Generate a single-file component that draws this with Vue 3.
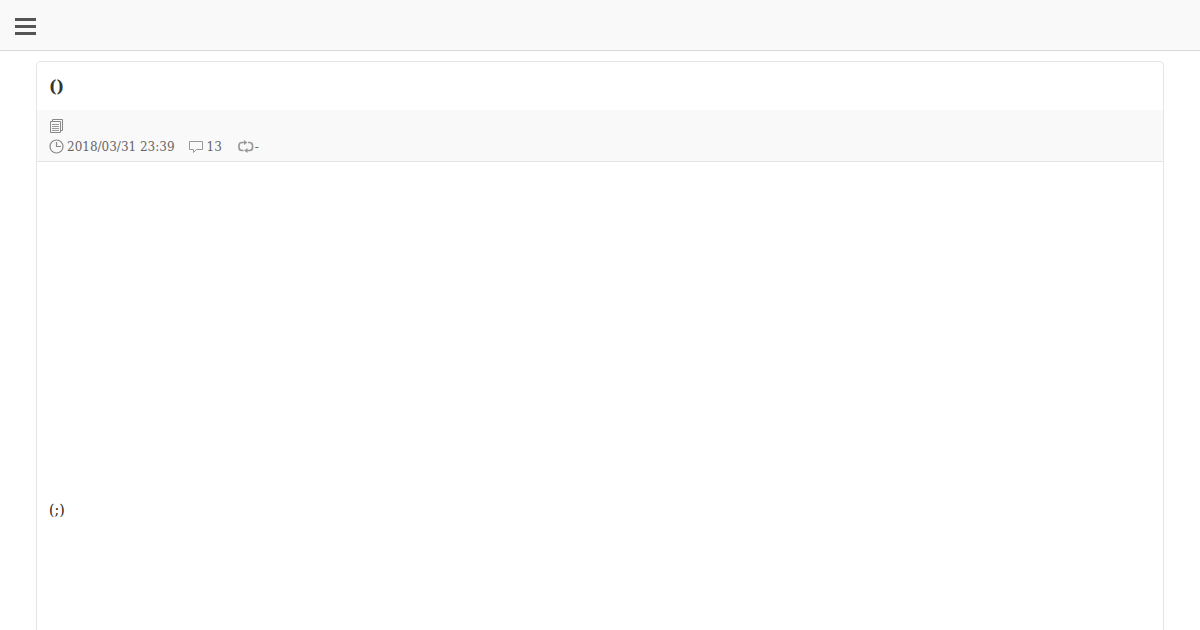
<script setup>
const title = '()'
const posted = '2018/03/31 23:39'
const comments = 13
const trackbacks = '-'
</script>

<template>
  <div class="page">
    <header class="bar">
      <button class="menu" type="button" aria-label="Menu">
        <span></span><span></span><span></span>
      </button>
    </header>
    <main class="card">
      <h1 class="title">{{ title }}</h1>
      <div class="meta">
        <div class="row">
          <svg width="15" height="16" viewBox="0 2 15 16" fill="none" stroke="#888">
            <path d="M3.5 4.5V2.5h10v11H11.5" />
            <path d="M1.5 4.5h10v11h-10z" />
            <path d="M3 7.5h7M3 9.5h7M3 11.5h7M3 13.5h7" stroke="#999" />
          </svg>
        </div>
        <div class="row">
          <span class="item">
            <svg width="15" height="16" viewBox="0 2 15 16" fill="none" stroke="#888">
              <circle cx="7.5" cy="9.5" r="6.5" stroke-width="1.2" />
              <path d="M7.5 5v4.5H12" stroke-width="1.2" />
            </svg>
            <time>{{ posted }}</time>
          </span>
          <span class="item">
            <svg width="15" height="16" viewBox="0 2 15 16" fill="none" stroke="#999">
              <path d="M0.5 4.5h13v8H7.5L4.5 15.5v-3h-4z" />
            </svg>
            <span>{{ comments }}</span>
          </span>
          <span class="item loop">
            <svg width="16" height="16" viewBox="0 2 16 16" fill="none" stroke="#999" stroke-width="1.7">
              <path d="M7 5.500H4Q1 5.500 1 8.500v2q0 3 3 3h1.500" />
              <path d="M8 13.500h3.500q3 0 3-3v-2q0-3-3-3H10" />
              <path d="M6 3l3.500 2.500L6 8zM9.500 11L6 13.500l3.500 2.500z" fill="#999" stroke="none" />
            </svg>
            <span>{{ trackbacks }}</span>
          </span>
        </div>
      </div>
      <article class="body">
        <p>{{ '(;)' }}</p>
      </article>
    </main>
  </div>
</template>

<style>
body {
  margin: 0;
  background: #fff;
}
</style>

<style scoped>
.page {
  min-height: 100vh;
  display: flex;
  flex-direction: column;
  font-family: "DejaVu Serif", serif;
  color: #333;
}
.bar {
  display: flex;
  align-items: center;
  height: 50px;
  padding: 0 12px;
  background: #f9f9f9;
  border-bottom: 1px solid #d8d8d8;
}
.menu {
  display: flex;
  flex-direction: column;
  gap: 4px;
  padding: 3px;
  margin-top: 3px;
  border: 0;
  background: none;
}
.menu span {
  width: 21px;
  height: 3px;
  background: #555;
}
.card {
  flex: 1;
  margin: 10px 3% 0;
  border: 1px solid #e5e5e5;
  border-bottom: 0;
  border-radius: 5px 5px 0 0;
}
.title {
  margin: 0;
  padding: 13px 12px 11px;
  font-size: 16px;
  line-height: 24px;
}
.meta {
  padding: 7px 12px 4px;
  background: #f9f9f9;
  border-bottom: 1px solid #e5e5e5;
  color: #666;
  font-size: 12px;
  line-height: 20px;
}
.row {
  display: flex;
  align-items: center;
  gap: 14px;
  height: 20px;
}
.item {
  display: flex;
  align-items: center;
  gap: 3px;
}
.loop {
  gap: 1px;
  margin-left: 2px;
}
.body {
  padding: 336px 12px 80px;
  font-size: 14px;
  line-height: 24px;
  color: #222;
}
.body p {
  margin: 0;
}
</style>
